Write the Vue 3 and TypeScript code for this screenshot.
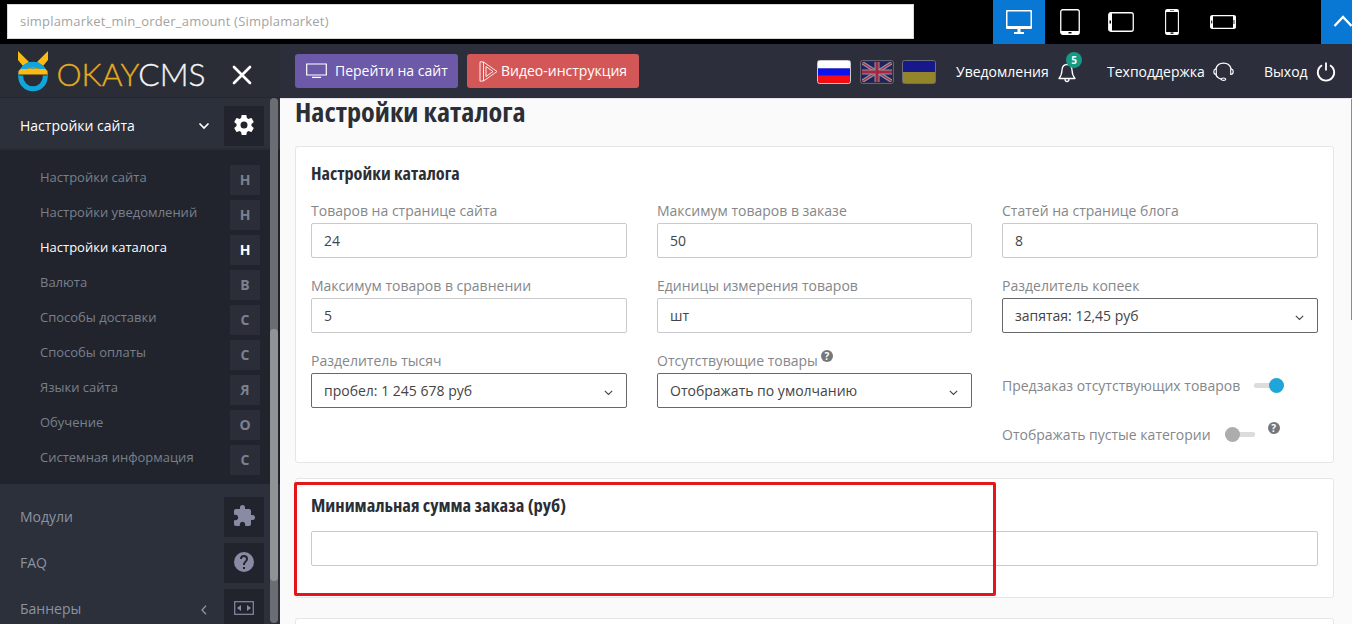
<script setup lang="ts">
interface SubItem { label: string; letter: string; active?: boolean }

const subItems: SubItem[] = [
  { label: 'Настройки сайта', letter: 'Н' },
  { label: 'Настройки уведомлений', letter: 'Н' },
  { label: 'Настройки каталога', letter: 'Н', active: true },
  { label: 'Валюта', letter: 'В' },
  { label: 'Способы доставки', letter: 'С' },
  { label: 'Способы оплаты', letter: 'С' },
  { label: 'Языки сайта', letter: 'Я' },
  { label: 'Обучение', letter: 'О' },
  { label: 'Системная информация', letter: 'С' },
]

interface Field { label: string; value: string; select?: boolean; help?: boolean }

const fields: Field[] = [
  { label: 'Товаров на странице сайта', value: '24' },
  { label: 'Максимум товаров в заказе', value: '50' },
  { label: 'Статей на странице блога', value: '8' },
  { label: 'Максимум товаров в сравнении', value: '5' },
  { label: 'Единицы измерения товаров', value: 'шт' },
  { label: 'Разделитель копеек', value: 'запятая: 12,45 руб', select: true },
  { label: 'Разделитель тысяч', value: 'пробел: 1 245 678 руб', select: true },
  { label: 'Отсутствующие товары', value: 'Отображать по умолчанию', select: true, help: true },
]
</script>

<template>
  <div class="page">
    <div class="topbar">
      <div class="address"><span>simplamarket_min_order_amount (Simplamarket)</span></div>
      <div class="devices">
        <div class="device on">
          <svg width="26" height="24" viewBox="0 0 26 24"><path fill="#fff" fill-rule="evenodd" d="M1 0h24a1 1 0 0 1 1 1v17a1 1 0 0 1-1 1H14.500v3H18v2H8v-2h3.500v-3H1a1 1 0 0 1-1-1V1a1 1 0 0 1 1-1zM1.500 1.500v14.500h23V1.500z" /></svg>
        </div>
        <div class="device">
          <svg width="20" height="26" viewBox="0 0 20 26"><rect x=".75" y=".75" width="18.500" height="24.500" rx="2" fill="none" stroke="#fff" stroke-width="1.300" /><path fill="#fff" d="M1 22h18v2.500a1 1 0 0 1-1 1H2a1 1 0 0 1-1-1z" /><rect x="8.500" y="23" width="3" height="1.500" fill="#000" /></svg>
        </div>
        <div class="device">
          <svg width="26" height="20" viewBox="0 0 26 20"><rect x=".75" y=".75" width="24.500" height="18.500" rx="2" fill="none" stroke="#fff" stroke-width="1.300" /><path fill="#fff" d="M1 2a1 1 0 0 1 1-1h2v18H2a1 1 0 0 1-1-1z" /><rect x="1.500" y="8.500" width="1.500" height="3" fill="#000" /></svg>
        </div>
        <div class="device">
          <svg width="14" height="26" viewBox="0 0 14 26"><rect x=".6" y=".6" width="12.800" height="24.800" rx="1.500" fill="none" stroke="#fff" stroke-width="1.100" /><path fill="#fff" d="M1 1h12v2H1zM1 23h12v2.500H1z" /><path fill="#000" d="M5.500 23.600h3v1.200h-3zM5 1.500h4v.5H5z" /></svg>
        </div>
        <div class="device">
          <svg width="26" height="14" viewBox="0 0 26 14"><rect x=".6" y=".6" width="24.800" height="12.800" rx="1.500" fill="none" stroke="#fff" stroke-width="1.100" /><path fill="#fff" d="M1 1h2v12H1zM23 1h2.500v12H23z" /><path fill="#000" d="M1.200 5.500h1v3h-1zM23.600 5h.8v4h-.8z" /></svg>
        </div>
      </div>
      <div class="collapse">
        <svg width="20" height="14" viewBox="0 0 20 14"><path d="M1.500 12 10 3l8.500 9" fill="none" stroke="#fff" stroke-width="2.300" /></svg>
      </div>
    </div>

    <div class="body">
      <aside class="sidebar">
        <div class="brand">
          <svg class="logo" width="190" height="42" viewBox="0 0 190 42">
            <path fill="#fbbb14" d="M1 0l11 11-6 4-5-6zM31 0 20 11l6 4 5-6z" />
            <circle cx="16" cy="25.500" r="12.300" fill="none" stroke="#12a5db" stroke-width="5" />
            <path fill="#2a2c36" d="M2 18h28v6.500H2z" />
            <path fill="#12a5db" d="M3.500 18.500C7 8.500 25 8.500 28.500 18.500z" />
            <path fill="#fbbb14" d="M3.500 18h25l2 2v3.500h-29V20z" />
            <path fill="none" stroke="#d99b19" stroke-width="1" d="M10 18q6-2.500 12 0" />
            <text x="39.500" y="35" font-size="31.500" textLength="149" lengthAdjust="spacingAndGlyphs" class="logo-text"><tspan fill="#e2ab1e" stroke="#e2ab1e">OKAY</tspan><tspan fill="#f3f3f5" stroke="#f3f3f5">CMS</tspan></text>
          </svg>
          <svg class="close" width="20" height="20" viewBox="0 0 20 20"><path d="M2 2l16 16M18 2 2 18" stroke="#fff" stroke-width="2.700" stroke-linecap="round" /></svg>
        </div>
        <div class="group">
          <span class="group-label">Настройки сайта</span>
          <svg width="12" height="8" viewBox="0 0 12 8"><path d="m1.500 1.500 4.500 4.500 4.500-4.500" fill="none" stroke="#fff" stroke-width="1.700" /></svg>
          <span class="tile"><svg width="24" height="24" viewBox="0 0 24 24"><path fill="#fff" d="M19.430 12.980c.04-.32.07-.64.07-.98s-.03-.66-.07-.98l2.110-1.650c.19-.15.24-.42.12-.64l-2-3.460c-.12-.22-.39-.3-.61-.22l-2.490 1c-.52-.4-1.080-.73-1.690-.98l-.38-2.650A.49.49 0 0 0 14 2h-4c-.25 0-.46.18-.49.42l-.38 2.650c-.61.25-1.170.59-1.690.98l-2.490-1c-.23-.09-.49 0-.61.22l-2 3.460c-.13.22-.07.49.12.64l2.110 1.650c-.04.32-.07.65-.07.98s.03.66.07.98l-2.110 1.650c-.19.15-.24.42-.12.64l2 3.460c.12.22.39.3.61.22l2.490-1c.52.4 1.080.73 1.690.98l.38 2.650c.03.24.24.42.49.42h4c.25 0 .46-.18.49-.42l.38-2.650c.61-.25 1.170-.59 1.690-.98l2.490 1c.23.09.49 0 .61-.22l2-3.460c.12-.22.07-.49-.12-.64zM12 15.500a3.500 3.500 0 1 1 0-7 3.500 3.500 0 0 1 0 7z" /></svg></span>
        </div>
        <ul class="submenu">
          <li v-for="item in subItems" :key="item.label" :class="{ active: item.active }">
            <span class="sub-label">{{ item.label }}</span><b>{{ item.letter }}</b>
          </li>
        </ul>
        <div class="others">
          <div class="other">
            <span>Модули</span>
            <i class="tile"><svg width="24" height="24" viewBox="0 0 24 24"><path fill="#888ba3" d="M20.500 11H19V7c0-1.100-.9-2-2-2h-4V3.500a2.500 2.500 0 0 0-5 0V5H4c-1.100 0-1.990.9-1.990 2v3.800H3.500c1.490 0 2.700 1.210 2.700 2.700s-1.210 2.700-2.700 2.700H2V20c0 1.100.9 2 2 2h3.800v-1.500c0-1.490 1.210-2.700 2.700-2.700s2.700 1.210 2.700 2.700V22H17c1.100 0 2-.9 2-2v-4h1.500a2.500 2.500 0 0 0 0-5z" /></svg></i>
          </div>
          <div class="other">
            <span>FAQ</span>
            <i class="tile"><svg width="24" height="24" viewBox="0 0 24 24"><path fill="#888ba3" d="M12 2a10 10 0 1 0 0 20 10 10 0 0 0 0-20zm1 17h-2v-2h2zm2.070-7.750-.9.920C13.450 12.900 13 13.500 13 15h-2v-.5c0-1.100.45-2.100 1.170-2.830l1.240-1.260A2 2 0 1 0 10 9H8a4 4 0 1 1 8 0c0 .88-.36 1.680-.93 2.250z" /></svg></i>
          </div>
          <div class="other">
            <span>Баннеры</span>
            <svg class="left" width="8" height="10" viewBox="0 0 8 10"><path d="M6 .8 2 5l4 4.200" fill="none" stroke="#8b95a3" stroke-width="1.300" /></svg>
            <i class="tile"><svg width="20" height="14" viewBox="0 0 20 14"><rect x=".7" y=".7" width="18.600" height="12.600" fill="none" stroke="#888ba3" stroke-width="1.200" /><path fill="#888ba3" d="M7 4v6L3 7zM13 4v6l4-3z" /></svg></i>
          </div>
        </div>
        <div class="side-track"><div class="side-thumb"></div></div>
      </aside>

      <div class="right">
        <header class="header">
          <a class="btn violet"><svg width="21" height="16" viewBox="0 0 21 16"><path d="M.7 1h19.600v11H.7zM6 14.300h9" fill="none" stroke="#fff" stroke-width="1.200" /></svg><span>Перейти на сайт</span></a>
          <a class="btn red"><svg width="19" height="21" viewBox="0 0 19 21"><path d="M4.500 1 18 10.500 4.500 20zM7 5.500l7 5-7 5zM4.500 1 1 .8v19.400l3.500-.3" fill="none" stroke="#ffe9e9" stroke-width="1" /></svg><span>Видео-инструкция</span></a>
          <div class="flags">
            <svg class="flag" width="34" height="24" viewBox="0 0 34 24"><path fill="#fff" d="M1 1h32v7.500H1z" /><path fill="#0b12f2" d="M1 8.500h32v7H1z" /><path fill="#f30d12" d="M1 15.500h32V23H1z" /><rect x=".5" y=".5" width="33" height="23" rx="2" fill="none" stroke="#c7c8cf" /></svg>
            <svg class="flag" width="34" height="24" viewBox="0 0 34 24"><path fill="#1f2260" d="M1 1h32v22H1z" /><path d="M1 2l32 20M33 2 1 22" stroke="#98939f" stroke-width="3.500" /><path d="M1 2l32 20M33 2 1 22" stroke="#a12b46" stroke-width="1.100" /><path d="M17 1v22M1 12h32" stroke="#98939f" stroke-width="5" /><path d="M17 1v22M1 12h32" stroke="#a12742" stroke-width="3" /><rect x="1" y="1" width="32" height="22" rx="2" fill="none" stroke="#2c2f3b" stroke-width="2" /><rect x=".5" y=".5" width="33" height="23" rx="2" fill="none" stroke="#62646e" /></svg>
            <svg class="flag" width="34" height="24" viewBox="0 0 34 24"><path fill="#17188b" d="M1 1h32v11H1z" /><path fill="#93852c" d="M1 12h32v11H1z" /><rect x=".5" y=".5" width="33" height="23" rx="2" fill="none" stroke="#6c6e77" /></svg>
          </div>
          <div class="link notify"><span>Уведомления</span><svg width="18" height="20" viewBox="0 0 18 20"><path d="M9 1.500c-3.500 0-4.800 2.500-5 5.500-.2 4-.8 6-3 8.500h16c-2.200-2.500-2.800-4.500-3-8.500-.2-3-1.500-5.500-5-5.500zM7 16q0 2.500 2 2.500T11 16" fill="none" stroke="#fff" stroke-width="1.300" stroke-linejoin="round" /></svg><em>5</em></div>
          <div class="link support"><span>Техподдержка</span><svg width="21" height="19" viewBox="0 0 21 19"><path d="M2.800 7A8 8 0 0 1 18.200 7M2.800 12.500C3.800 15 5.500 16.600 8.300 17" fill="none" stroke="#fff" stroke-width="1.300" /><path d="M3.300 7v5.500C1.500 12.500.8 11.500.8 9.800S1.500 7 3.300 7zM17.700 7v5.500c1.800 0 2.500-1 2.500-2.700S19.500 7 17.700 7z" fill="none" stroke="#fff" stroke-width="1.100" /><ellipse cx="10.500" cy="17.200" rx="2.200" ry="1.200" fill="none" stroke="#fff" stroke-width="1.200" /></svg></div>
          <div class="link exit"><span>Выход</span><svg width="20" height="20" viewBox="0 0 20 20"><path d="M6 3.200a8.200 8.200 0 1 0 8 0M10 .5v8" fill="none" stroke="#fff" stroke-width="1.800" /></svg></div>
        </header>

        <main class="content">
          <h1>Настройки каталога</h1>
          <section class="card main-card">
            <h2>Настройки каталога</h2>
            <div class="grid">
              <div v-for="f in fields" :key="f.label" class="field">
                <label>{{ f.label }}<i v-if="f.help" class="help">?</i></label>
                <div class="control" :class="{ select: f.select }">
                  <span>{{ f.value }}</span>
                  <svg v-if="f.select" width="9" height="6" viewBox="0 0 9 6"><path d="m.8 .8 3.700 3.700L8.200.8" fill="none" stroke="#444" stroke-width="1.100" /></svg>
                </div>
              </div>
              <div class="switches">
                <div class="switch-row"><span>Предзаказ отсутствующих товаров</span><i class="switch on"></i></div>
                <div class="switch-row second"><span>Отображать пустые категории</span><i class="switch"></i><i class="help">?</i></div>
              </div>
            </div>
          </section>
          <section class="card amount-card">
            <h2 class="wide">Минимальная сумма заказа (руб)</h2>
            <div class="control"></div>
            <div class="highlight"></div>
          </section>
          <section class="card next-card"></section>
          <div class="page-thumb"></div>
        </main>
      </div>
    </div>
  </div>
</template>

<style>
html, body { background: #fff; }
</style>

<style scoped>
* { box-sizing: border-box; }
.page { width: 1352px; height: 624px; overflow: hidden; font-family: "Open Sans", sans-serif; font-size: 14px; background: #fafafb; }
.topbar { height: 44px; background: #000; display: flex; align-items: flex-start; padding: 0 0 0 7px; }
.address { margin-top: 4px; width: 907px; height: 35px; background: #fff; border: 1px solid #d8d8d8; padding-left: 12px; line-height: 33px; font-size: 13px; color: #a3a3a3; letter-spacing: .19px; }
.devices { display: flex; margin-left: 79px; }
.device { width: 51px; height: 44px; display: flex; align-items: center; justify-content: center; }
.device svg { margin-left: -2px; }
.device.on { width: 52px; background: #0878d4; }
.device.on svg { margin-left: 0; margin-bottom: 0; }
.collapse { margin-left: auto; width: 31px; height: 44px; background: #0878d4; overflow: hidden; padding: 14px 0 0 12px; }
.collapse svg { display: block; }
.body { display: flex; height: 580px; }
.sidebar { width: 280px; background: #2c303b; position: relative; overflow: hidden; display: flex; flex-direction: column; }
.brand { height: 54px; flex: none; background: #2a2c36; display: flex; padding-left: 17px; border-bottom: 1px solid #24262e; }
.logo { margin-top: 7px; overflow: visible; }
.logo-text { font-family: Lato, sans-serif; font-weight: 300; stroke-width: .35px; }
.close { margin: 21px 0 0 25px; }
.group { height: 52px; flex: none; display: flex; align-items: center; padding-left: 20px; color: #fff; background: #2b303b; border-bottom: 2px solid #272b34; }
.group-label { width: 178px; line-height: 20px; padding-top: 5px; }
.group > svg { margin-top: 5px; }
.tile { width: 40px; height: 40px; background: #21242c; display: flex; align-items: center; justify-content: center; }
.group .tile { margin-left: 14px; margin-top: 6px; }
.group .tile svg { margin-bottom: 2px; }
.submenu { list-style: none; margin: 0; padding: 15px 20px 0 40px; height: 334px; flex: none; background: #21242c; }
.submenu li { display: flex; justify-content: space-between; height: 35px; color: #78808c; font-size: 13px; }
.sub-label { line-height: 24px; }
.submenu b { width: 30px; height: 30px; background: #2b2e39; font-size: 14px; line-height: 29px; text-align: center; color: #7c8090; }
.submenu .active, .submenu .active b { color: #fff; }
.others { padding-top: 13px; }
.other { display: flex; height: 46px; align-items: flex-start; padding-left: 20px; color: #8b93a0; }
.other span { width: 178px; line-height: 40px; }
.other .tile { margin-left: auto; margin-right: 16px; }
.other .tile svg { margin: 0 1px 2px 0; }
.left { margin: 16px 0 0 2px; }
.side-track { position: absolute; left: 270px; top: 54px; width: 8px; height: 525px; border-radius: 4px; background: #6b6d73; padding-top: 231px; }
.side-thumb { height: 252px; border-radius: 4px; background: #929396; }
.right { width: 1072px; display: flex; flex-direction: column; }
.header { height: 54px; flex: none; background: #2c2f3b; display: flex; align-items: flex-start; padding-left: 15px; color: #fff; }
.btn { height: 34px; margin-top: 10px; border-radius: 3px; display: flex; align-items: center; white-space: nowrap; }
.btn span { margin-top: -1px; }
.violet { width: 163px; background: #6c59a8; padding-left: 11px; margin-right: 9px; }
.violet span { margin-left: 8px; }
.red { width: 172px; background: #d45757; padding-left: 12px; }
.red span { margin-left: 3px; }
.flags { display: flex; gap: 8.500px; margin: 16px 0 0 178px; }
.link { display: flex; align-items: center; height: 55px; white-space: nowrap; position: relative; }
.notify { margin-left: 20px; width: 151px; }
.notify svg { margin-left: 9px; margin-top: 2px; }
.notify em { position: absolute; left: 110px; top: 8px; width: 16px; height: 16px; border-radius: 8px; background: #159a83; font: bold 10px/16px "Open Sans", sans-serif; text-align: center; }
.support { width: 157px; }
.support svg { margin-left: 8px; }
.exit svg { margin-left: 8px; }
.content { flex: 1; padding: 0 18px 0 15px; position: relative; background: #fafafb; border-top: 1px solid #e4e4e8; }
h1, h2 { margin: 0; color: #2c2e36; font-weight: 700; font-stretch: 75%; white-space: nowrap; transform-origin: 0 50%; }
h1 { width: 300px; font-size: 26.500px; line-height: 27px; height: 47px; transform: scaleX(1.065); }
h2 { width: 300px; font-size: 17.500px; line-height: 24px; transform: scaleX(1.04); }
.wide { transform: scaleX(1.0625); }
.card { background: #fff; border: 1px solid #e6e6e8; border-radius: 3px; padding: 14px 15px 0; }
.main-card { height: 317px; }
.grid { display: grid; grid-template-columns: 316px 315px 316px; gap: 0 30px; margin-top: 12px; }
.field { height: 75px; }
label { display: block; height: 26px; line-height: 27px; color: #85878a; white-space: nowrap; }
.control { height: 35px; border: 1px solid #c9cacc; border-radius: 2px; background: #fff; display: flex; align-items: center; padding: 0 13px 0 12px; color: #444; }
.control.select { border-color: #66686b; justify-content: space-between; }
.control svg { margin-top: 4px; }
.help { display: inline-block; width: 12px; height: 12px; border-radius: 6px; background: #76777a; color: #fff; font: bold 10px/12px "Open Sans", sans-serif; text-align: center; }
label .help { margin-left: 3px; vertical-align: 6px; }
.switches { padding-top: 28px; color: #85878a; }
.switch-row { display: flex; height: 20px; align-items: center; white-space: nowrap; }
.second { margin-top: 29px; }
.switch { width: 30px; height: 5px; border-radius: 2px; background: #dcdcdd; margin-left: 14px; position: relative; }
.switch::after { content: ""; position: absolute; left: 0; top: -5px; width: 15px; height: 15px; border-radius: 50%; background: #adadad; }
.switch.on::after { left: 15px; background: #20a5d8; }
.switch-row .help { margin: -12px 0 0 13px; }
.amount-card { height: 120px; margin-top: 15px; position: relative; }
.amount-card .control { margin-top: 14px; }
.highlight { position: absolute; left: -2px; top: 3px; width: 702px; height: 114px; border: 3px solid #e3171b; border-radius: 2px; }
.next-card { height: 30px; margin-top: 20px; }
.page-thumb { position: absolute; right: 0; top: 0; width: 1px; height: 221px; background: #8c8c8e; }
</style>
